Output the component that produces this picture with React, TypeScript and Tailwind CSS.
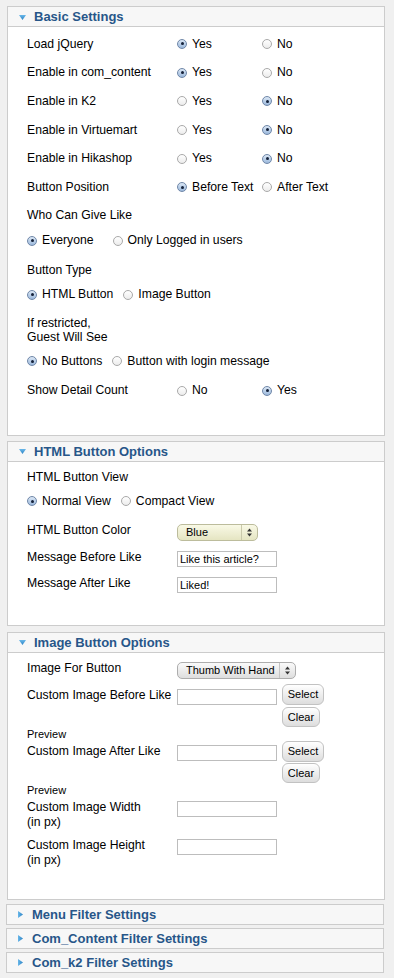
import React from "react";

function Radio({ checked }: { checked?: boolean }) {
  return checked ? (
    <span className="w-[10px] h-[10px] shrink-0 rounded-full border border-[#6f87a8] bg-gradient-to-b from-[#dbe7f5] to-[#9cb9dc] flex items-center justify-center">
      <span className="w-[3px] h-[3px] rounded-full bg-[#14213a]" />
    </span>
  ) : (
    <span className="w-[10px] h-[10px] shrink-0 rounded-full border border-[#a9a9a9] bg-gradient-to-b from-[#ffffff] to-[#ececec]" />
  );
}

function Opt({ label, checked, fixed, gap = "mr-[10px]" }: { label: string; checked?: boolean; fixed?: boolean; gap?: string }) {
  return (
    <div className={`flex items-center ${fixed ? "w-[85px]" : gap}`}>
      <Radio checked={checked} />
      <span className="ml-[5px] whitespace-nowrap">{label}</span>
    </div>
  );
}

function Row({ label, a, b, aOn }: { label: string; a: string; b: string; aOn: boolean }) {
  return (
    <div className="flex items-center h-[28.67px]">
      <div className="w-[150px] shrink-0">{label}</div>
      <Opt label={a} checked={aOn} fixed />
      <Opt label={b} checked={!aOn} fixed />
    </div>
  );
}

function Header({ title, open }: { title: string; open: boolean }) {
  return (
    <div className={`flex items-center bg-[#f7f7f7] pl-[11px] ${open ? "h-[20px] border-b border-[#cccccc]" : "h-[19px]"}`}>
      {open ? (
        <svg width="7" height="5" viewBox="0 0 7 5" className="shrink-0 mt-[1px]">
          <defs>
            <linearGradient id={`gd${title.length}`} x1="0" y1="0" x2="0" y2="1">
              <stop offset="0" stopColor="#6ab8ea" />
              <stop offset="1" stopColor="#2a82c4" />
            </linearGradient>
          </defs>
          <path d="M0 0 H7 L3.5 5 Z" fill={`url(#gd${title.length})`} />
        </svg>
      ) : (
        <svg width="5" height="7" viewBox="0 0 5 7" className="shrink-0">
          <defs>
            <linearGradient id={`gr${title.length}`} x1="0" y1="0" x2="1" y2="0">
              <stop offset="0" stopColor="#6ab8ea" />
              <stop offset="1" stopColor="#2a82c4" />
            </linearGradient>
          </defs>
          <path d="M0 0 V7 L5 3.5 Z" fill={`url(#gr${title.length})`} />
        </svg>
      )}
      <span className={`${open ? "ml-[8px]" : "ml-[9px]"} font-bold text-[13px] text-[#275689] leading-none`}>{title}</span>
    </div>
  );
}

function Select({ value, width, yellow }: { value: string; width: string; yellow?: boolean }) {
  return (
    <div
      className={`h-[17px] ${width} flex items-stretch rounded-[5px] border text-[11px] text-black ${
        yellow
          ? "border-[#bcbc9c] bg-gradient-to-b from-[#f9f9e6] to-[#e5e5c2]"
          : "border-[#adadad] bg-gradient-to-b from-[#fafafa] to-[#dedede]"
      }`}
    >
      <div className="flex-1 flex items-center pl-[8px] whitespace-nowrap">{value}</div>
      <div className={`w-[16px] border-l flex items-center justify-center ${yellow ? "border-[#c9c9ab]" : "border-[#c4c4c4]"}`}>
        <svg width="5" height="9" viewBox="0 0 5 9">
          <path d="M0 3.5 L2.5 0.5 L5 3.5 Z" fill="#333" />
          <path d="M0 5.5 L2.5 8.5 L5 5.5 Z" fill="#333" />
        </svg>
      </div>
    </div>
  );
}

function Input({ value = "", h = "h-[16px]" }: { value?: string; h?: string }) {
  return (
    <div className={`w-[100px] ${h} border border-[#bdbdbd] bg-white text-[11px] leading-[14px] pl-[2px] text-black whitespace-nowrap overflow-hidden flex items-center`}>
      {value}
    </div>
  );
}

function Btn({ label, w, h }: { label: string; w: string; h: string }) {
  return (
    <div className={`${w} ${h} rounded-[6px] border border-[#c2c2c2] bg-gradient-to-b from-[#ffffff] to-[#dddddd] flex items-center justify-center text-[11px] text-black`}>
      {label}
    </div>
  );
}

export default function App() {
  return (
    <div className="w-[394px] min-h-[978px] bg-[#f0f0f0] font-['Liberation_Sans',Arial,Helvetica,sans-serif] text-[12.2px] text-black pt-[6px] pb-[6px]">
      {/* Basic Settings */}
      <div className="ml-[7px] w-[378px] border border-[#cccccc] bg-white">
        <Header title="Basic Settings" open />
        <div className="pl-[19px] pt-[2.67px] pb-[30px]">
          <Row label="Load jQuery" a="Yes" b="No" aOn />
          <Row label="Enable in com_content" a="Yes" b="No" aOn />
          <Row label="Enable in K2" a="Yes" b="No" aOn={false} />
          <Row label="Enable in Virtuemart" a="Yes" b="No" aOn={false} />
          <Row label="Enable in Hikashop" a="Yes" b="No" aOn={false} />
          <Row label="Button Position" a="Before Text" b="After Text" aOn />
          <div className="pt-[4px] pb-[6px]">
            <div className="h-[20px] flex items-center">Who Can Give Like</div>
            <div className="h-[20px] mt-[5px] flex items-center">
              <Opt label="Everyone" checked gap="mr-[19px]" />
              <Opt label="Only Logged in users" />
            </div>
          </div>
          <div className="pt-[4px] pb-[7px]">
            <div className="h-[20px] flex items-center">Button Type</div>
            <div className="h-[20px] mt-[4px] flex items-center">
              <Opt label="HTML Button" checked />
              <Opt label="Image Button" />
            </div>
          </div>
          <div className="pt-[4px] pb-[4.9px]">
            <div className="leading-[14.4px]">
              If restricted,
              <br />
              Guest Will See
            </div>
            <div className="h-[20px] mt-[7px] flex items-center">
              <Opt label="No Buttons" checked />
              <Opt label="Button with login message" />
            </div>
          </div>
          <Row label="Show Detail Count" a="No" b="Yes" aOn={false} />
        </div>
      </div>

      {/* HTML Button Options */}
      <div className="ml-[7px] mt-[5px] w-[378px] border border-[#cccccc] bg-white">
        <Header title="HTML Button Options" open />
        <div className="pl-[19px] pt-[8.2px] pb-[31.5px]">
          <div className="leading-[15px]">HTML Button View</div>
          <div className="h-[20px] mt-[6.1px] flex items-center">
            <Opt label="Normal View" checked />
            <Opt label="Compact View" />
          </div>
          <div className="flex mt-[11.7px]">
            <div className="w-[150px] shrink-0 leading-[15px]">HTML Button Color</div>
            <div className="mt-[1px]">
              <Select value="Blue" width="w-[81px]" yellow />
            </div>
          </div>
          <div className="flex mt-[9px]">
            <div className="w-[150px] shrink-0 leading-[15px]">Message Before Like</div>
            <div className="mt-[1px]">
              <Input value="Like this article?" />
            </div>
          </div>
          <div className="flex mt-[9.5px]">
            <div className="w-[150px] shrink-0 leading-[15px]">Message After Like</div>
            <div className="mt-[1px]">
              <Input value="Liked!" />
            </div>
          </div>
        </div>
      </div>

      {/* Image Button Options */}
      <div className="ml-[7px] mt-[6px] w-[378px] border border-[#cccccc] bg-white">
        <Header title="Image Button Options" open />
        <div className="pl-[19px] pt-[8.5px] pb-[31px]">
          <div className="flex">
            <div className="w-[150px] shrink-0 leading-[15px]">Image For Button</div>
            <div className="mt-[0.5px]">
              <Select value="Thumb With Hand" width="w-[119px]" />
            </div>
          </div>
          <div className="flex mt-[5px]">
            <div className="w-[150px] shrink-0 leading-[15px] pt-[4.5px] whitespace-nowrap">Custom Image Before Like</div>
            <div className="mt-[5px]">
              <Input h="h-[16px]" />
            </div>
            <div className="ml-[5px] flex flex-col">
              <Btn label="Select" w="w-[42px]" h="h-[21px]" />
              <div className="mt-[2px]">
                <Btn label="Clear" w="w-[38px]" h="h-[20px]" />
              </div>
            </div>
          </div>
          <div className="text-[11px] leading-[13px] mt-[0.8px]">Preview</div>
          <div className="flex">
            <div className="w-[150px] shrink-0 leading-[15px] pt-[3.7px]">Custom Image After Like</div>
            <div className="mt-[4.5px]">
              <Input h="h-[16px]" />
            </div>
            <div className="ml-[5px] flex flex-col">
              <Btn label="Select" w="w-[42px]" h="h-[21px]" />
              <div className="mt-[1.5px]">
                <Btn label="Clear" w="w-[38px]" h="h-[20px]" />
              </div>
            </div>
          </div>
          <div className="text-[11px] leading-[13px] mt-[0.5px]">Preview</div>
          <div className="flex mt-[3.4px]">
            <div className="w-[150px] shrink-0 leading-[15px]">
              Custom Image Width
              <br />
              (in px)
            </div>
            <div className="mt-[0.8px]">
              <Input />
            </div>
          </div>
          <div className="flex mt-[8px]">
            <div className="w-[150px] shrink-0 leading-[15px]">
              Custom Image Height
              <br />
              (in px)
            </div>
            <div className="mt-[1.1px]">
              <Input />
            </div>
          </div>
        </div>
      </div>

      {/* Collapsed */}
      <div className="ml-[6px] mt-[4px] w-[378px] flex flex-col gap-[3px]">
        {["Menu Filter Settings", "Com_Content Filter Settings", "Com_k2 Filter Settings"].map((t) => (
          <div key={t} className="border border-[#cccccc] bg-[#f7f7f7]">
            <Header title={t} open={false} />
          </div>
        ))}
      </div>
    </div>
  );
}
